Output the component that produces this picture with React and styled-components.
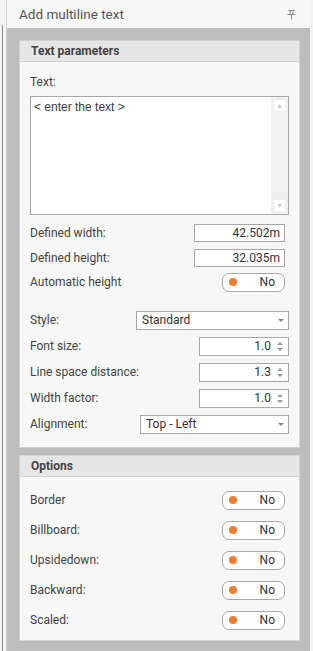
import React from "react";
import styled, { createGlobalStyle } from "styled-components";

const Global = createGlobalStyle`
  body {
    margin: 0;
    background: #f4f4f4;
    font-family: Roboto, "Liberation Sans", sans-serif;
  }
`;

const Page = styled.div`
  display: flex;
  width: 313px;
  height: 651px;
  overflow: hidden;
`;

const Edge = styled.div`
  width: 6px;
  flex: none;
  display: flex;
  padding-top: 25px;
  box-sizing: border-box;
  &::before {
    content: "";
    margin-left: 2px;
    width: 1px;
    background: #8c8c8c;
  }
`;

const Panel = styled.div`
  width: 304px;
  flex: none;
  display: flex;
  flex-direction: column;
  border-left: 1px solid #d4d4d4;
  box-sizing: border-box;
`;

const Title = styled.div`
  height: 28px;
  flex: none;
  display: flex;
  align-items: center;
  justify-content: space-between;
  padding: 0 14px 0 12px;
  background: #f7f7f7;
  color: #555;
  font-size: 13.5px;
`;

const Body = styled.div`
  flex: 1;
  background: #bdbdbd;
  padding: 12px 10px 0 12px;
  display: flex;
  flex-direction: column;
  gap: 7px;
`;

const Group = styled.section`
  background: #f7f7f7;
  border: 1px solid #d2d2d2;
`;

const GroupHead = styled.div`
  height: 20px;
  display: flex;
  align-items: center;
  padding-left: 11px;
  background: #e6e6e6;
  border-bottom: 1px solid #d2d2d2;
  color: #444;
  font-weight: 700;
  font-size: 12px;
`;

const GroupBody = styled.div`
  padding: ${({ $pad }) => $pad};
  display: flex;
  flex-direction: column;
`;

const Label = styled.span`
  color: #444;
  font-size: 12px;
`;

const TextLabel = styled(Label)`
  display: block;
  line-height: 16px;
`;

const TextBox = styled.div`
  margin-top: 6px;
  height: 119px;
  box-sizing: border-box;
  border: 1px solid #a8a8a8;
  background: #fff;
  display: flex;
`;

const TextContent = styled.div`
  flex: 1;
  padding: 3px 3px;
  font-family: "Liberation Sans", Arial, sans-serif;
  font-size: 12px;
  color: #3a3a48;
`;

const Scroll = styled.div`
  width: 17px;
  background: #f0f0f0;
  display: flex;
  flex-direction: column;
  justify-content: space-between;
  align-items: center;
  padding: 2px 0;
`;

const ScrollBtn = styled.div`
  width: 13px;
  height: 13px;
  background: #fff;
  border: 1px solid #eee;
  box-sizing: border-box;
  display: flex;
  align-items: center;
  justify-content: center;
  color: #c8c8c8;
  font-size: 7px;
`;

const Row = styled.div`
  height: 20px;
  margin-top: ${({ $mt }) => $mt}px;
  display: flex;
  align-items: center;
  justify-content: space-between;
`;

const Field = styled.div`
  width: ${({ $w }) => $w}px;
  height: ${({ $h }) => $h || 19}px;
  box-sizing: border-box;
  border: 1px solid #a8a8a8;
  background: #fff;
  display: flex;
  align-items: center;
  padding: 0 4px 0 5px;
  font-size: 12px;
  color: #333;
  margin-right: ${({ $mr }) => $mr || 0}px;
`;

const Value = styled.span`
  flex: 1;
  text-align: ${({ $align }) => $align || "left"};
`;

const Arrow = styled.span`
  width: 0;
  height: 0;
  border-left: 3px solid transparent;
  border-right: 3px solid transparent;
  border-top: 3px solid #8a8a8a;
  margin-left: 4px;
`;

const Spin = styled.span`
  display: flex;
  flex-direction: column;
  gap: 3px;
  margin-left: 6px;
  margin-right: 1px;
  & > i {
    width: 0;
    height: 0;
    border-left: 3px solid transparent;
    border-right: 3px solid transparent;
  }
  & > i:first-child {
    border-bottom: 3px solid #999;
  }
  & > i:last-child {
    border-top: 3px solid #999;
  }
`;

const Toggle = styled.div`
  width: 63px;
  height: 19px;
  box-sizing: border-box;
  border: 1px solid #a8a8a8;
  border-radius: 7px;
  background: #fff;
  display: flex;
  align-items: center;
  justify-content: space-between;
  padding: 0 9px 0 6px;
  margin-right: ${({ $mr }) => $mr || 0}px;
  font-size: 12px;
  color: #333;
  &::before {
    content: "";
    width: 8px;
    height: 8px;
    border-radius: 50%;
    background: #f07c30;
  }
`;

const Pin = () => (
  <svg width="9" height="11" viewBox="0 0 9 11">
    <g stroke="#888" strokeWidth="1" fill="none">
      <path d="M1.5 1.5h6" />
      <path d="M3 1.5v4M6 1.5v4" />
      <path d="M0.5 5.5h8" />
      <path d="M4.5 5.5v5" />
    </g>
  </svg>
);

const spinRows = [
  { label: "Font size:", value: "1.0", mt: 6 },
  { label: "Line space distance:", value: "1.3", mt: 6 },
  { label: "Width factor:", value: "1.0", mt: 6 },
];

const options = ["Border", "Billboard:", "Upsidedown:", "Backward:", "Scaled:"];

export default function App() {
  return (
    <Page>
      <Global />
      <Edge />
      <Panel>
        <Title>
          <span>Add multiline text</span>
          <Pin />
        </Title>
        <Body>
          <Group>
            <GroupHead>Text parameters</GroupHead>
            <GroupBody $pad="12px 10px 13px 10px">
              <TextLabel>Text:</TextLabel>
              <TextBox>
                <TextContent>&lt; enter the text &gt;</TextContent>
                <Scroll>
                  <ScrollBtn>▲</ScrollBtn>
                  <ScrollBtn>▼</ScrollBtn>
                </Scroll>
              </TextBox>
              <Row $mt={8}>
                <Label>Defined width:</Label>
                <Field $w={91} $mr={4} $h={18}>
                  <Value $align="right">42.502m</Value>
                </Field>
              </Row>
              <Row $mt={5}>
                <Label>Defined height:</Label>
                <Field $w={91} $mr={4} $h={18}>
                  <Value $align="right">32.035m</Value>
                </Field>
              </Row>
              <Row $mt={4}>
                <Label>Automatic height</Label>
                <Toggle $mr={4}>No</Toggle>
              </Row>
              <Row $mt={18}>
                <Label>Style:</Label>
                <Field $w={153}>
                  <Value>Standard</Value>
                  <Arrow />
                </Field>
              </Row>
              {spinRows.map((r) => (
                <Row key={r.label} $mt={r.mt}>
                  <Label>{r.label}</Label>
                  <Field $w={90} $h={19}>
                    <Value $align="right">{r.value}</Value>
                    <Spin>
                      <i />
                      <i />
                    </Spin>
                  </Field>
                </Row>
              ))}
              <Row $mt={6}>
                <Label>Alignment:</Label>
                <Field $w={149}>
                  <Value>Top - Left</Value>
                  <Arrow />
                </Field>
              </Row>
            </GroupBody>
          </Group>
          <Group>
            <GroupHead>Options</GroupHead>
            <GroupBody $pad="13px 10px 10px 10px">
              {options.map((o, i) => (
                <Row key={o} $mt={i === 0 ? 0 : 10}>
                  <Label>{o}</Label>
                  <Toggle $mr={4}>No</Toggle>
                </Row>
              ))}
            </GroupBody>
          </Group>
        </Body>
      </Panel>
    </Page>
  );
}
